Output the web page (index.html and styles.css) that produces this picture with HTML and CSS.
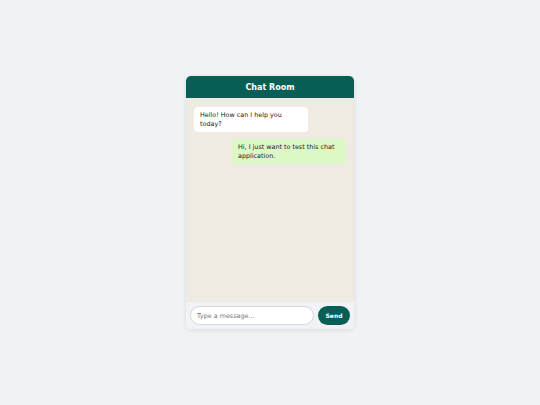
FILE: index.html
```html
<!DOCTYPE html>
<html>
<head>
<meta charset="utf-8">
<link rel="stylesheet" href="styles.css">
</head>
<body>
<div class="chat">
  <div class="chat-header">Chat Room</div>
  <div class="chat-body">
    <div class="msg msg-in">Hello! How can I help you today?</div>
    <div class="msg msg-out">Hi, I just want to test this chat application.</div>
  </div>
  <div class="chat-footer">
    <input class="chat-input" type="text" placeholder="Type a message...">
    <button class="send-btn">Send</button>
  </div>
</div>
</body>
</html>
```
FILE: styles.css
```css
html, body {
  margin: 0;
  padding: 0;
  height: 100%;
}
body {
  background: #f0f2f5;
  font-family: "DejaVu Sans", Verdana, sans-serif;
  display: flex;
  align-items: center;
  justify-content: center;
}
.chat {
  width: 168px;
  height: 253px;
  display: flex;
  flex-direction: column;
  border-radius: 5px;
  overflow: hidden;
  background: #fff;
  box-shadow: 0 1px 5px rgba(0,0,0,0.1);
}
.chat-header {
  background: #075e54;
  color: #fff;
  font-weight: bold;
  font-size: 8px;
  height: 22px;
  display: flex;
  align-items: center;
  justify-content: center;
  flex-shrink: 0;
}
.chat-body {
  flex: 1;
  background: #efeae2;
  padding: 9px 8px;
  display: flex;
  flex-direction: column;
  gap: 7px;
}
.msg {
  box-sizing: border-box;
  width: 75%;
  font-size: 6.4px;
  line-height: 9px;
  padding: 3.5px 6px;
  border-radius: 4px;
  color: #222;
}
.msg-in {
  background: #ffffff;
  align-self: flex-start;
}
.msg-out {
  background: #dcf8c6;
  align-self: flex-end;
}
.chat-footer {
  flex-shrink: 0;
  height: 27px;
  box-sizing: border-box;
  padding: 4px;
  display: flex;
  gap: 4px;
  background: #f0f2f5;
}
.chat-input {
  flex: 1;
  min-width: 0;
  height: 19px;
  box-sizing: border-box;
  border: 0.5px solid #d6d6d6;
  border-radius: 10px;
  padding: 0 6px;
  font-family: "DejaVu Sans", Verdana, sans-serif;
  font-size: 6.4px;
  background: #fff;
  outline: none;
}
.chat-input::placeholder {
  color: #777;
}
.send-btn {
  width: 32px;
  height: 19px;
  border: none;
  border-radius: 10px;
  background: #075e54;
  color: #fff;
  font-family: "DejaVu Sans", Verdana, sans-serif;
  font-weight: bold;
  font-size: 6px;
  padding: 0;
}
```
